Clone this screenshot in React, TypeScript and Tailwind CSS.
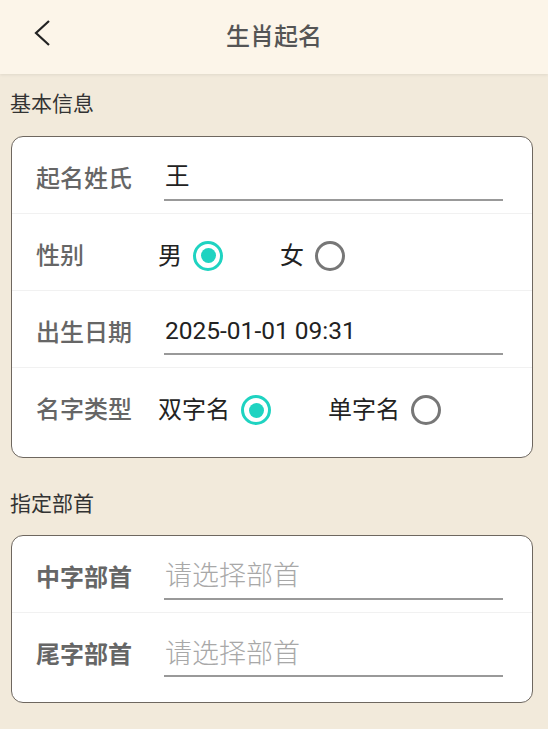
import React from 'react';

const FONT = 'font-["Roboto","Noto_Sans_CJK_SC",sans-serif]';

function Radio({ checked }: { checked: boolean }) {
  return checked ? (
    <span className="flex h-[30px] w-[30px] items-center justify-center rounded-full border-[3px] border-[#1fd3c1]">
      <span className="h-[15px] w-[15px] rounded-full bg-[#1fd3c1]" />
    </span>
  ) : (
    <span className="h-[30px] w-[30px] rounded-full border-[3px] border-[#777]" />
  );
}

function Option({ label, checked }: { label: string; checked: boolean }) {
  return (
    <div className="flex items-center gap-[11px]">
      <span className="text-[24px] leading-none text-[#222]">{label}</span>
      <Radio checked={checked} />
    </div>
  );
}

function Row({ label, bold, last, children }: { label: string; bold?: boolean; last?: boolean; children: React.ReactNode }) {
  return (
    <div className={`flex h-[77px] items-center pt-[7px] pl-[24px] pr-[29px] ${last ? '' : 'border-b border-[#f1f1f1]'}`}>
      <span className={`w-[122px] shrink-0 text-[24px] leading-none text-[#666] ${bold ? 'font-bold' : 'font-medium'}`}>{label}</span>
      {children}
    </div>
  );
}

function Field({ value, placeholder }: { value?: string; placeholder?: string }) {
  return (
    <div className="ml-[6px] flex h-[44px] flex-1 items-center border-b-2 border-[#999] pl-[1px]">
      {value ? (
        <span className="text-[24.5px] leading-none text-[#222]">{value}</span>
      ) : (
        <span className="text-[27px] font-light leading-none text-[#a8a8a8]">{placeholder}</span>
      )}
    </div>
  );
}

export default function App() {
  return (
    <div className={`min-h-[729px] w-[548px] bg-[#f2eadb] ${FONT}`}>
      <header className="relative flex h-[74px] items-center justify-center bg-[#fcf5e9] shadow-[0_1px_3px_rgba(0,0,0,0.08)]">
        <svg className="absolute left-[30px] top-[18px]" width="24" height="30" viewBox="0 0 24 30">
          <polyline points="19,3 6,15 19,27" fill="none" stroke="#222" strokeWidth="2.2" />
        </svg>
        <h1 className="text-[24px] font-medium leading-none text-[#555]">生肖起名</h1>
      </header>

      <div className="flex h-[62px] items-center px-[10px] text-[21px] text-[#333]">基本信息</div>
      <div className="ml-[11px] mr-[15px] rounded-[12px] border-[1.5px] border-[#6e675f] bg-white pb-[12px]">
        <Row label="起名姓氏">
          <Field value="王" />
        </Row>
        <Row label="性别">
          <div className="flex items-center gap-[57px]">
            <Option label="男" checked />
            <Option label="女" checked={false} />
          </div>
        </Row>
        <Row label="出生日期">
          <Field value="2025-01-01 09:31" />
        </Row>
        <Row label="名字类型" last>
          <div className="flex items-center gap-[57px]">
            <Option label="双字名" checked />
            <Option label="单字名" checked={false} />
          </div>
        </Row>
      </div>

      <div className="mt-[16px] flex h-[61px] items-center px-[10px] text-[21px] text-[#333]">指定部首</div>
      <div className="ml-[11px] mr-[15px] rounded-[12px] border-[1.5px] border-[#6e675f] bg-white pb-[12px]">
        <Row label="中字部首" bold>
          <Field placeholder="请选择部首" />
        </Row>
        <Row label="尾字部首" bold last>
          <Field placeholder="请选择部首" />
        </Row>
      </div>
    </div>
  );
}
